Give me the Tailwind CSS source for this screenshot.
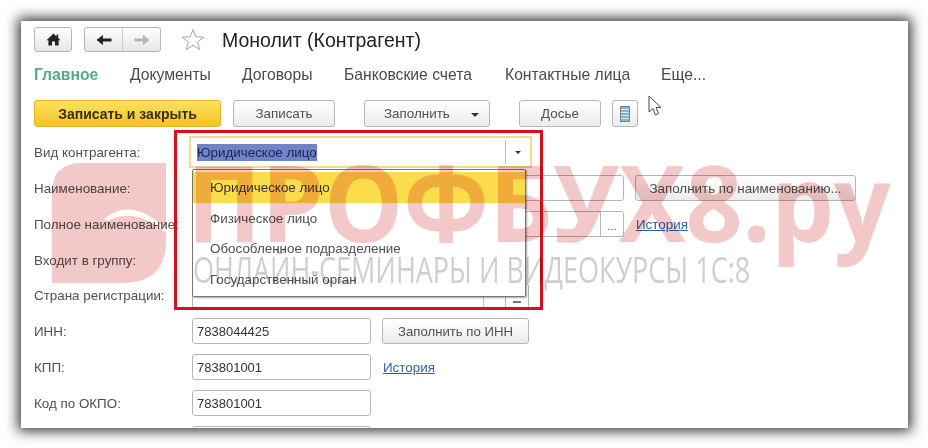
<!doctype html>
<html><head><meta charset="utf-8"><script src="https://cdn.jsdelivr.net/npm/@tailwindcss/browser@4"></script></head>
<body class="bg-white w-[928px] h-[448px] overflow-hidden font-['Liberation_Sans',sans-serif]">
<div class="p-[21px] pb-0">
<div class="relative w-[887px] h-[407px] bg-white shadow-[0_0_12px_3px_rgba(30,30,30,0.9)]">
<div class="absolute inset-0 overflow-hidden pl-[13px] pt-[6px] text-[13.4px] text-[#505050] blur-[0.35px]">

<!-- title bar -->
<div class="flex items-center h-[25px]">
  <div class="w-[38px] h-[25px] border border-[#b5b5b5] rounded-[3px] bg-gradient-to-b from-white to-[#e6e6e6] flex items-center justify-center">
    <svg width="15" height="13" viewBox="0 0 15 13"><path d="M7.5 0.5 L10.5 3.4 V1.5 H12.2 V5 L14.5 7.2 H12.6 V12.5 H9 V8.5 H6 V12.5 H2.4 V7.2 H0.5 Z" fill="#222"/></svg>
  </div>
  <div class="ml-[12px] w-[77px] h-[25px] border border-[#b5b5b5] rounded-[3px] bg-gradient-to-b from-white to-[#e6e6e6] flex">
    <div class="w-[38px] border-r border-[#ccc] flex items-center justify-center"><svg width="16" height="12" viewBox="0 0 16 12"><path d="M0.5 6 L7 1 V4.4 H15.5 V7.6 H7 V11 Z" fill="#222"/></svg></div>
    <div class="flex-1 flex items-center justify-center"><svg width="16" height="12" viewBox="0 0 16 12"><path d="M15.5 6 L9 1 V4.4 H0.5 V7.6 H9 V11 Z" fill="#b5b5b5"/></svg></div>
  </div>
  <svg class="ml-[20px]" width="24" height="23" viewBox="0 0 24 23"><path d="M12 1.5 L14.8 8.8 L22.8 9.2 L16.5 14 L18.7 21.6 L12 17.3 L5.3 21.6 L7.5 14 L1.2 9.2 L9.2 8.8 Z" fill="none" stroke="#a5a5a5" stroke-width="1"/></svg>
  <div class="ml-[17px] text-[19.5px] text-[#222] pt-[3px]">Монолит (Контрагент)</div>
</div>

<!-- tabs -->
<div class="flex mt-[13px] h-[20px] items-center text-[15.7px] text-[#4a4a4a]">
  <div class="w-[96px] font-bold text-[#4fae82]">Главное</div>
  <div class="w-[112px]">Документы</div>
  <div class="w-[102px]">Договоры</div>
  <div class="w-[161px]">Банковские счета</div>
  <div class="w-[156px]">Контактные лица</div>
  <div>Еще...</div>
</div>

<!-- toolbar -->
<div class="flex mt-[15px] h-[27px] items-stretch relative">
  <div class="w-[187px] pt-[2px] rounded-[3px] bg-gradient-to-b from-[#fbe35a] to-[#f6c21e] border border-[#e6b52a] flex items-center justify-center font-bold text-[14px] text-[#3a3010]">Записать и закрыть</div>
  <div class="ml-[12px] w-[102px] pt-[2px] rounded-[3px] border border-[#b5b5b5] bg-gradient-to-b from-white to-[#ececec] flex items-center justify-center">Записать</div>
  <div class="ml-[29px] w-[126px] pt-[2px] rounded-[3px] border border-[#b5b5b5] bg-gradient-to-b from-white to-[#ececec] flex items-center pl-[19px]">Заполнить<span class="ml-[21px] w-0 h-0 border-x-[4px] border-x-transparent border-t-[4px] border-t-[#333]"></span></div>
  <div class="ml-[29px] w-[82px] pt-[2px] rounded-[3px] border border-[#b5b5b5] bg-gradient-to-b from-white to-[#ececec] flex items-center justify-center">Досье</div>
  <div class="ml-[11px] w-[26px] rounded-[3px] border border-[#b5b5b5] bg-gradient-to-b from-white to-[#ececec] flex items-center justify-center">
    <svg width="10" height="16" viewBox="0 0 10 16"><rect x="0.5" y="0.5" width="9" height="15" fill="#8fb0cc" stroke="#67839c"/><path d="M1 3.5H9M1 6.5H9M1 9.5H9M1 12.5H9" stroke="#dfe8f0"/></svg>
  </div>
</div>

<!-- form -->
<div class="flex flex-col mt-[7px]">
  <div class="flex items-center h-[36px]"><div class="w-[158px] pt-[2px]">Вид контрагента:</div>
    <div class="-ml-[3px] w-[343px] h-[32px] border-2 border-[#f2dc8c] flex items-stretch">
      <div class="flex-1 pl-[6px] flex items-center"><span class="bg-[#6f83c8] text-[#20264a] leading-[17px]">Юридическое лицо</span></div>
      <div class="w-[25px] my-[2px] border-l border-[#bbb] flex items-center justify-center"><span class="w-0 h-0 border-x-[3px] border-x-transparent border-t-[3px] border-t-[#333]"></span></div>
    </div>
  </div>
  <div class="flex items-center h-[36px]"><div class="w-[158px] pt-[2px]">Наименование:</div>
    <div class="w-[432px] h-[26px] border border-[#b5b5b5] rounded-[3px]"></div>
    <div class="ml-[11px] w-[221px] h-[26px] pt-[2px] border border-[#b5b5b5] rounded-[3px] bg-gradient-to-b from-white to-[#ececec] flex items-center justify-center">Заполнить по наименованию...</div>
  </div>
  <div class="flex items-center h-[36px]"><div class="w-[158px] pt-[2px]">Полное наименование:</div>
    <div class="w-[432px] h-[26px] border border-[#b5b5b5] rounded-[3px] flex justify-end"><div class="w-[23px] border-l border-[#bbb] text-center text-[11px] leading-[28px]">...</div></div>
    <a class="ml-[12px] pt-[2px] text-[#2f5fa8] underline">История</a>
  </div>
  <div class="flex items-center h-[36px]"><div class="w-[158px] pt-[2px]">Входит в группу:</div></div>
  <div class="flex items-center h-[35px]"><div class="w-[158px] pt-[2px]">Страна регистрации:</div>
    <div class="w-[337px] h-[26px] border border-[#b5b5b5] rounded-[3px] flex justify-end"><div class="w-[22px] border-l border-[#bbb]"></div><div class="w-[23px] border-l border-[#bbb]"><div class="w-[8px] h-[2px] bg-[#777] mt-[17px] mx-auto"></div></div></div>
  </div>
  <div class="flex items-center h-[36px]"><div class="w-[158px] pt-[2px]">ИНН:</div>
    <div class="w-[179px] h-[26px] pt-[2px] border border-[#b5b5b5] rounded-[3px] pl-[4px] flex items-center text-[13px] text-[#333]">7838044425</div>
    <div class="ml-[11px] w-[147px] h-[26px] pt-[2px] border border-[#b5b5b5] rounded-[3px] bg-gradient-to-b from-white to-[#ececec] flex items-center justify-center text-[13.2px]">Заполнить по ИНН</div>
  </div>
  <div class="flex items-center h-[36px]"><div class="w-[158px] pt-[2px]">КПП:</div>
    <div class="w-[179px] h-[26px] pt-[2px] border border-[#b5b5b5] rounded-[3px] pl-[4px] flex items-center text-[13px] text-[#333]">783801001</div>
    <a class="ml-[12px] pt-[2px] text-[#2f5fa8] underline">История</a>
  </div>
  <div class="flex items-center h-[36px]"><div class="w-[158px] pt-[2px]">Код по ОКПО:</div>
    <div class="w-[179px] h-[26px] pt-[2px] border border-[#b5b5b5] rounded-[3px] pl-[4px] flex items-center text-[13px] text-[#333]">783801001</div>
  </div>
  <div class="flex items-start h-[36px] pt-[5px]"><div class="w-[158px]"></div>
    <div class="w-[179px] h-[26px] border border-[#b5b5b5] rounded-[3px]"></div>
  </div>
</div>

<!-- dropdown popup -->
<div class="absolute left-[171px] top-[148px] w-[334px] h-[128px] bg-white border border-[#777] rounded-[2px] shadow-[1px_1px_2px_rgba(0,0,0,0.35)] pt-[2px]">
  <div class="h-[31px] pt-[2px] pl-[17px] flex items-center bg-[#fcdc4a] text-[#333]">Юридическое лицо</div>
  <div class="h-[30px] pt-[2px] pl-[17px] flex items-center">Физическое лицо</div>
  <div class="h-[31px] pt-[2px] pl-[17px] flex items-center">Обособленное подразделение</div>
  <div class="h-[30px] pt-[2px] pl-[17px] flex items-center">Государственный орган</div>
</div>
</div>

<!-- cursor -->
<svg class="absolute left-[627px] top-[74px]" width="14" height="22" viewBox="0 0 14 22"><path d="M1 1 L1 17 L5 13.5 L7.5 20 L10.5 18.5 L8 12.5 L13 12.5 Z" fill="#fff" stroke="#444" stroke-width="1"/></svg>

<!-- red frame -->
<div class="absolute left-[153px] top-[109px] w-[369px] h-[180px] border-[3px] border-[#d8101c]"></div>

<!-- watermark -->
<div class="absolute inset-0 mix-blend-multiply pointer-events-none overflow-hidden">
  <svg class="absolute left-[31px] top-[142px]" width="114" height="120" viewBox="0 0 114 120"><path d="M0 30 Q0 0 30 0 H114 V78 Q114 120 70 120 H0 Z" fill="#f2c8c8"/><path d="M52 56 Q80 33 114 66 L114 70 Q82 43 56 58 Z" fill="#fff"/></svg>
  <div class="absolute left-[166px] top-[106px] text-[105px] leading-[150px] font-['Open_Sans',sans-serif] font-bold text-[#f2c8c8] whitespace-nowrap origin-left scale-x-[0.95]">ПРОФБУХ8.ру</div>
  <div class="absolute left-[172px] top-[229px] text-[36px] leading-[40px] font-['Open_Sans',sans-serif] text-[#cfcfcf] whitespace-nowrap origin-left scale-x-[0.75]">ОНЛАЙН-СЕМИНАРЫ И ВИДЕОКУРСЫ 1С:8</div>
</div>
</div>
</div>
</body></html>
